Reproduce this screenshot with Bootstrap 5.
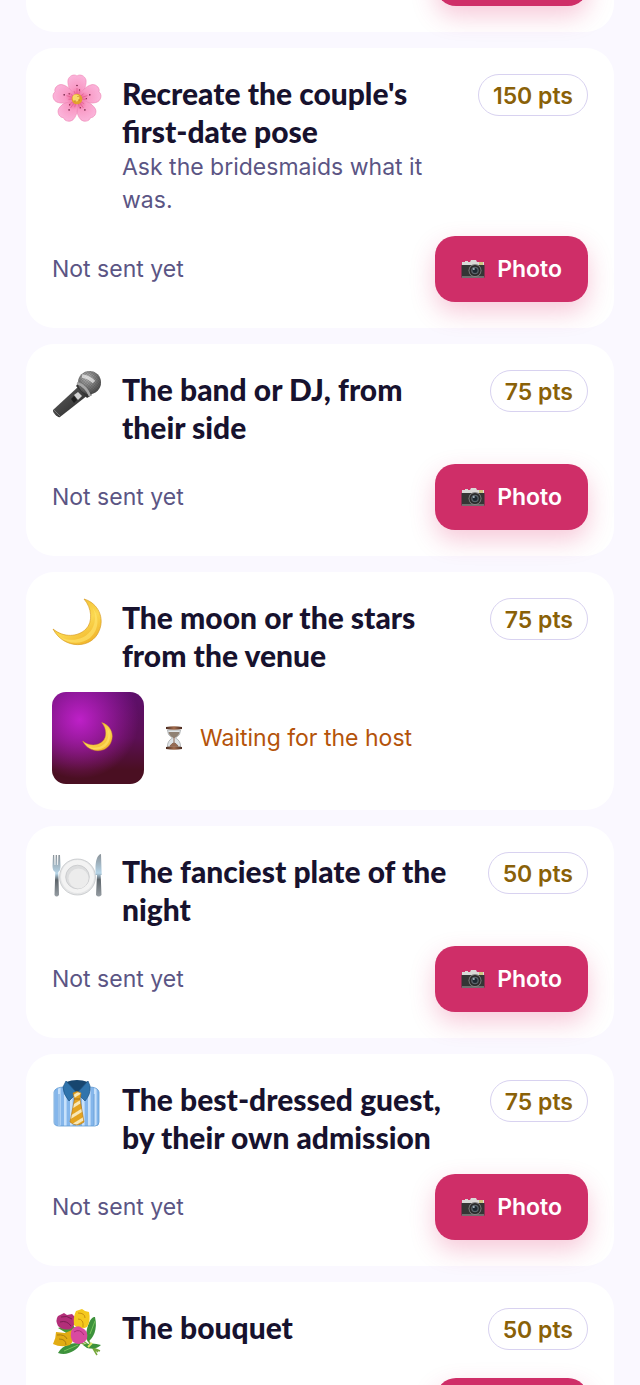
<!DOCTYPE html>
<html lang="en">
<head>
<meta charset="utf-8">
<meta name="viewport" content="width=device-width, initial-scale=1">
<title>Photo challenges</title>
<link href="https://cdn.jsdelivr.net/npm/bootstrap@5.3.0/dist/css/bootstrap.min.css" rel="stylesheet">
<style>
  body { background: #faf8ff; color: #5b5584; font-family: Inter, "Liberation Sans", sans-serif; font-size: 23px; line-height: 33px; }
  .feed { height: 100vh; padding: 0 26px; gap: 16px; overflow: hidden; }
  .task { flex: none; background: #fff; border-radius: 28px; padding: 26px; gap: 18px; }
  .task-head { gap: 18px; }
  .task-icon { width: 52px; height: 52px; flex: none; }
  .task h2 { color: #17122e; font-family: Lato, Inter, sans-serif; font-weight: 900; font-size: 30px; line-height: 38px; margin: 0; }
  .hint { margin: 1px 0; }
  .pts { flex: none; height: 42px; padding: 0 14px; border: 1px solid #d8d2f0; border-radius: 21px; color: #8a6108; font-weight: 600; line-height: 42px; }
  .btn-photo { --bs-btn-bg: #cf2e68; --bs-btn-color: #fff; --bs-btn-hover-bg: #b92459; --bs-btn-hover-color: #fff; min-width: 152px; height: 66px; padding: 0 26px; gap: 12px; border: 0; border-radius: 20px; font-size: 23px; font-weight: 600; box-shadow: 0 10px 24px rgba(224, 40, 105, .25); }
  .btn-photo svg { width: 24px; height: 24px; }
  .thumb { width: 92px; height: 92px; border-radius: 14px; background: radial-gradient(circle at 30% 30%, rgba(190, 32, 200, 1) 0, rgba(190, 32, 200, 0) 65%), linear-gradient(180deg, #5d0f6b 0, #5c0f55 50%, #4a0f22 85%); }
  .thumb svg { width: 32px; height: 32px; }
  .waiting { color: #b4530a; gap: 14px; }
  .waiting svg { width: 24px; height: 24px; }
  .from-above { padding-top: 0; border-top-left-radius: 0; border-top-right-radius: 0; margin-top: -60px; }
</style>
</head>
<body>
<svg width="0" height="0" class="position-absolute" aria-hidden="true">
  <defs>
    <radialGradient id="petalFill" cx=".5" cy=".85" r=".9"><stop offset="0" stop-color="#ee6698"/><stop offset=".4" stop-color="#f99bc6"/><stop offset="1" stop-color="#fbb6dc"/></radialGradient>
    <linearGradient id="moonFill" x1=".2" y1="0" x2=".8" y2="1"><stop offset="0" stop-color="#f0b92d"/><stop offset=".55" stop-color="#fbd850"/><stop offset="1" stop-color="#f0b127"/></linearGradient>
    <linearGradient id="micBody" x1="0" y1="0" x2="1" y2="1"><stop offset="0" stop-color="#8b8b8b"/><stop offset=".4" stop-color="#494949"/><stop offset="1" stop-color="#222"/></linearGradient>
    <radialGradient id="micHead" cx=".4" cy=".3" r=".7"><stop offset="0" stop-color="#c5c5c5"/><stop offset="1" stop-color="#4c4c4c"/></radialGradient>
    <pattern id="mesh" width="2" height="2" patternUnits="userSpaceOnUse" patternTransform="rotate(40)"><path d="M0 0H2M0 0V2" stroke="#333" stroke-width=".7"/></pattern>
    <linearGradient id="steel" x1="0" y1="0" x2="0" y2="1"><stop offset="0" stop-color="#8a9298"/><stop offset=".45" stop-color="#b6d5e8"/><stop offset=".6" stop-color="#5c646a"/><stop offset="1" stop-color="#969da3"/></linearGradient>
    <pattern id="stripes" width="6" height="8" patternUnits="userSpaceOnUse"><path fill="#84b6eb" d="M0 0H6V8H0z"/><path fill="#c7e1fb" d="M0 0H2.6V8H0z"/></pattern>
    <pattern id="tieStripes" width="6" height="8" patternUnits="userSpaceOnUse" patternTransform="rotate(-32)"><path fill="#e3a321" d="M0 0H6V8H0z"/><path fill="#f8e7b5" d="M0 0H6V3H0z"/></pattern>
    <linearGradient id="wood" x1="0" y1="0" x2="1" y2="0"><stop offset="0" stop-color="#4a2b20"/><stop offset=".5" stop-color="#a06a4b"/><stop offset="1" stop-color="#4a2b20"/></linearGradient>

    <symbol id="petal" viewBox="0 0 52 52">
      <path d="M25 25C20 20 15 13 16 6 17 2 22-.5 25 2 28-.5 33 2 34 6 35 13 30 20 25 25z" fill="url(#petalFill)" stroke="#ee86b5" stroke-width=".6"/>
      <path d="M25 24V14M25 24L22 17M25 24L28 17" stroke="#e0568b" stroke-width=".6"/>
      <circle cx="25" cy="11.500" r=".8" fill="#702040"/><circle cx="27.500" cy="16" r=".7" fill="#8b2448"/>
    </symbol>
    <symbol id="flower" viewBox="0 0 52 52">
      <use href="#petal" width="52" height="52"/>
      <use href="#petal" width="52" height="52" transform="rotate(72 25 25)"/>
      <use href="#petal" width="52" height="52" transform="rotate(144 25 25)"/>
      <use href="#petal" width="52" height="52" transform="rotate(216 25 25)"/>
      <use href="#petal" width="52" height="52" transform="rotate(288 25 25)"/>
      <circle cx="25" cy="25" r="5.300" fill="#e2a22d"/><circle cx="24" cy="24" r="3.400" fill="#f8d968"/>
      <g fill="#b77420"><circle cx="27" cy="26" r=".7"/><circle cx="23" cy="27" r=".7"/><circle cx="26" cy="22.500" r=".6"/></g>
    </symbol>
    <symbol id="mic" viewBox="0 0 52 52">
      <path d="M27 16L1 40C0 42 6 48.500 8 47L36 25z" fill="url(#micBody)"/>
      <path d="M2 40L8 46" stroke="#777" stroke-width="1"/>
      <path d="M27 12L40 25 35 28 24 16z" fill="#343434"/>
      <circle cx="37.500" cy="12.500" r="11.500" fill="url(#micHead)"/><circle cx="37.500" cy="12.500" r="11.500" fill="url(#mesh)" opacity=".6"/>
      <path d="M30 6Q37 7 42 12" stroke="#eee" stroke-width="3.500" fill="none" opacity=".7"/>
      <path d="M25 13Q34 16 38 26" stroke="#a7a7a7" stroke-width="2.500" fill="none"/>
      <path d="M22 25L26 22 30 26 26 30z" fill="#d2d2d2"/><path d="M19 29L22 26 25 30 22 33z" fill="#1d1d1d"/>
    </symbol>
    <symbol id="moon" viewBox="0 0 52 52">
      <path d="M32 1C46 5 53 20 47 33 40 51 12 52 1 31 12 40 26 39 34 31 41 24 40 10 32 1z" fill="url(#moonFill)" stroke="#d99c24" stroke-width=".7"/>
      <path d="M8 39C20 45 34 41 40 31 44 24 44 15 40 9 49 20 46 33 38 40 29 47 16 46 8 39z" fill="#ffe36b" opacity=".65"/>
    </symbol>
    <symbol id="plate" viewBox="0 0 52 52">
      <circle cx="25.500" cy="25" r="18" fill="#e4e5e6" stroke="#c5c8ca" stroke-width=".8"/>
      <circle cx="25.500" cy="24.500" r="16.500" fill="#f3f3f3"/>
      <circle cx="25.500" cy="25" r="11.800" fill="#dcddde" stroke="#c5c7c9" stroke-width=".8"/><circle cx="26.500" cy="26.500" r="10" fill="#ececec"/>
      <path d="M1 3H2.200L2.600 13H3.400L3.700 3H5L5.300 13H6L6.400 3H8L8.500 14Q8.500 19 6.300 20L7 43Q4.500 46 2.500 43L3.300 20Q.5 19 .5 14z" fill="url(#steel)"/>
      <path d="M49 2C45 3 43.500 9 43.500 17V23H45L44 43Q46.500 46 49.500 43L48.700 23H49.700z" fill="url(#steel)"/>
    </symbol>
    <symbol id="shirt" viewBox="0 0 52 52">
      <path d="M13 7H37Q46 7 47 12V42Q47 46 43 46H7Q2 46 2 42V12Q3 7 13 7z" fill="url(#stripes)" stroke="#5e99d2" stroke-width=".8"/>
      <path d="M7 14V45M42 14V45" stroke="#6fa3d9" stroke-width="1"/>
      <path d="M14 2Q25-2 36 2L33 11 25 15 16 10z" fill="#17466f"/>
      <path d="M14 1L25 13 17 21Q11 14 11 7zM36 1L25 13 33 21Q39 14 38 6z" fill="#3074ac" stroke="#1c5586" stroke-width=".7"/>
      <path d="M21 13Q25 10 29 13L28 19 32 42Q25 48 18 42L22.500 19z" fill="url(#tieStripes)" stroke="#b97b18" stroke-width=".7"/>
      <path d="M22 19H28" stroke="#a56d17" stroke-width="1"/>
    </symbol>
    <symbol id="bouquet" viewBox="0 0 52 52">
      <path d="M30 22L45 47M26 29L46 44M20 31L48 43" stroke="#78a83d" stroke-width="1.500"/>
      <path d="M34 28C35 15 40 8 43 9 46 22 41 30 36 34zM6 45C11 36 20 35 29 35 25 43 15 48 6 45zM31 37Q40 34 49 37 44 42 35 40z" fill="#3d923c"/>
      <path d="M38 26L43 13M12 43L26 37" stroke="#76c35a" stroke-width="1"/>
      <path d="M6 20L20 16 24 21 16 26z" fill="#4a9b38"/>
      <path d="M6 8L12 5 15 7 20 6 23 9Q24 17 19 21 11 23 6 18 3 12 6 8z" fill="#b32e79"/>
      <path d="M9 9Q15 7 20 11M8 14Q15 12 19 18" stroke="#7c1d51" fill="none" stroke-width="1"/>
      <path d="M24 3L30 1 33 3 37 4Q39 13 35 19 27 23 22 17 21 9 24 3z" fill="#f4c91d"/>
      <path d="M26 5Q33 5 33 10M26 11Q32 11 31 19" stroke="#c9910f" fill="none" stroke-width="1"/>
      <path d="M4 24L13 25 20 22Q24 31 18 37 9 40 1 36 4 30 4 24z" fill="#e2ac13"/>
      <path d="M5 27Q13 26 15 31M7 31Q14 31 14 37" stroke="#a87c10" fill="none" stroke-width="1"/>
      <path d="M20 21Q26 16 30 20 37 23 35 31 29 39 21 34 17 28 20 21z" fill="#d94aa0"/>
      <path d="M22 24Q28 20 32 27" stroke="#a92c73" fill="none" stroke-width="1"/>
      <path d="M36 39L40 35" stroke="#e0e868" stroke-width="2"/>
    </symbol>
    <symbol id="camera" viewBox="0 0 24 24">
      <path d="M1 5H4V4H7V5H9L10 3H15L16 5H23V9H1z" fill="#d9d9d7"/>
      <path d="M.5 8H23.500V20Q23.500 21 22.500 21H1.500Q.5 21 .5 20z" fill="#353535"/>
      <path d="M1 20H23" stroke="#a9a9a9" stroke-width="1"/>
      <path d="M18 5H22V8H18z" fill="#cfc681"/>
      <circle cx="14" cy="13.500" r="6.500" fill="#858585"/><circle cx="14" cy="13.500" r="5.600" fill="#292929"/><circle cx="14" cy="13.500" r="3.800" fill="#59636a"/><circle cx="14" cy="13.500" r="2.500" fill="#1e2930"/><circle cx="12.800" cy="12" r="1" fill="#a9bac6"/>
    </symbol>
    <symbol id="hourglass" viewBox="0 0 24 24">
      <path d="M5.500 4H18.500Q19 9 13.500 12 19 15 18.500 21H5.500Q5 15 10.500 12 5 9 5.500 4z" fill="#dfe4e7" stroke="#a6a9ab" stroke-width=".8"/>
      <path d="M6.500 6H17.500Q17 10 12 12 7 10 6.500 6z" fill="#8f8173"/><path d="M12 11V20M8 20Q12 14 16 20z" fill="#9c6c50" stroke="#8d6955" stroke-width="1"/>
      <path d="M4 1Q12-.5 20 1V3Q12 4.500 4 3zM4 21Q12 19.500 20 21V23Q12 24.500 4 23z" fill="url(#wood)"/>
    </symbol>
  </defs>
</svg>

<main class="feed d-flex flex-column">
  <article class="task from-above d-flex flex-column">
    <div class="d-flex justify-content-end"><button class="btn btn-photo" type="button" aria-label="Photo"></button></div>
  </article>

  <article class="task d-flex flex-column">
    <div class="task-head d-flex align-items-start">
      <svg class="task-icon" aria-hidden="true"><use href="#flower"/></svg>
      <div class="flex-grow-1"><h2>Recreate the couple's first-date pose</h2><p class="hint">Ask the bridesmaids what it was.</p></div>
      <span class="pts">150 pts</span>
    </div>
    <div class="d-flex justify-content-between align-items-center">
      <span>Not sent yet</span>
      <button class="btn btn-photo d-flex align-items-center" type="button"><svg aria-hidden="true"><use href="#camera"/></svg>Photo</button>
    </div>
  </article>

  <article class="task d-flex flex-column">
    <div class="task-head d-flex align-items-start">
      <svg class="task-icon" aria-hidden="true"><use href="#mic"/></svg>
      <div class="flex-grow-1"><h2>The band or DJ, from their side</h2></div>
      <span class="pts">75 pts</span>
    </div>
    <div class="d-flex justify-content-between align-items-center">
      <span>Not sent yet</span>
      <button class="btn btn-photo d-flex align-items-center" type="button"><svg aria-hidden="true"><use href="#camera"/></svg>Photo</button>
    </div>
  </article>

  <article class="task d-flex flex-column">
    <div class="task-head d-flex align-items-start">
      <svg class="task-icon" aria-hidden="true"><use href="#moon"/></svg>
      <div class="flex-grow-1"><h2>The moon or the stars from the venue</h2></div>
      <span class="pts">75 pts</span>
    </div>
    <div class="task-head d-flex align-items-center">
      <div class="thumb d-flex align-items-center justify-content-center"><svg aria-hidden="true"><use href="#moon"/></svg></div>
      <span class="waiting d-flex align-items-center"><svg aria-hidden="true"><use href="#hourglass"/></svg>Waiting for the host</span>
    </div>
  </article>

  <article class="task d-flex flex-column">
    <div class="task-head d-flex align-items-start">
      <svg class="task-icon" aria-hidden="true"><use href="#plate"/></svg>
      <div class="flex-grow-1"><h2>The fanciest plate of the night</h2></div>
      <span class="pts">50 pts</span>
    </div>
    <div class="d-flex justify-content-between align-items-center">
      <span>Not sent yet</span>
      <button class="btn btn-photo d-flex align-items-center" type="button"><svg aria-hidden="true"><use href="#camera"/></svg>Photo</button>
    </div>
  </article>

  <article class="task d-flex flex-column">
    <div class="task-head d-flex align-items-start">
      <svg class="task-icon" aria-hidden="true"><use href="#shirt"/></svg>
      <div class="flex-grow-1"><h2>The best-dressed guest, by their own admission</h2></div>
      <span class="pts">75 pts</span>
    </div>
    <div class="d-flex justify-content-between align-items-center">
      <span>Not sent yet</span>
      <button class="btn btn-photo d-flex align-items-center" type="button"><svg aria-hidden="true"><use href="#camera"/></svg>Photo</button>
    </div>
  </article>

  <article class="task d-flex flex-column">
    <div class="task-head d-flex align-items-start">
      <svg class="task-icon" aria-hidden="true"><use href="#bouquet"/></svg>
      <div class="flex-grow-1"><h2>The bouquet</h2></div>
      <span class="pts">50 pts</span>
    </div>
    <div class="d-flex justify-content-end"><button class="btn btn-photo" type="button" aria-label="Photo"></button></div>
  </article>
</main>
<script src="https://cdn.jsdelivr.net/npm/bootstrap@5.3.0/dist/js/bootstrap.bundle.min.js"></script>
</body>
</html>
